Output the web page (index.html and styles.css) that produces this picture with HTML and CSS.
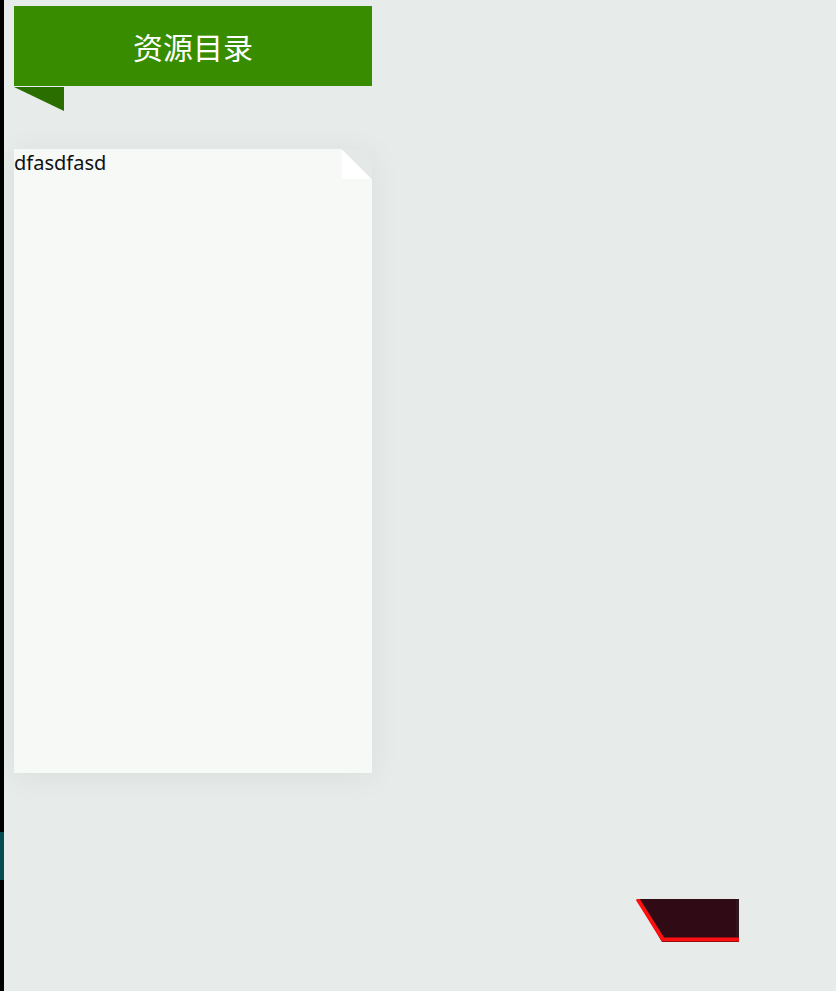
FILE: index.html
```html
<!DOCTYPE html>
<html lang="zh">
<head>
<meta charset="utf-8">
<title>资源目录</title>
<link rel="stylesheet" href="styles.css">
</head>
<body>
<div class="edge"><div class="edge-mark"></div></div>
<main class="main">
  <header class="banner">资源目录</header>
  <div class="banner-tail"></div>
  <section class="card">
    <div class="card-fold"></div>
    <p class="card-text">dfasdfasd</p>
  </section>
  <svg class="tag" width="104" height="44" viewBox="0 0 104 44">
    <polygon points="0.5,0 103,0 103,43 26,43" fill="#300a15"/>
    <polyline points="1.5,0 27,40.5 103,40.5" fill="none" stroke="#ff1010" stroke-width="4"/>
    <rect x="100" y="0" width="3" height="38" fill="#2f1620"/>
  </svg>
</main>
</body>
</html>
```

FILE: styles.css
```css
html, body {
  margin: 0;
  padding: 0;
}
body {
  background: #e7ebea;
  display: flex;
  min-height: 991px;
  font-family: "Noto Sans", "Noto Sans CJK SC", sans-serif;
}
.edge {
  width: 4px;
  flex: none;
  background: #000;
  padding-top: 832px;
  box-sizing: border-box;
}
.edge-mark {
  height: 48px;
  background: #064b4f;
}
.main {
  padding: 6px 0 0 10px;
  display: flex;
  flex-direction: column;
  align-items: flex-start;
}
.banner {
  width: 358px;
  height: 80px;
  background: #378c00;
  color: #fff;
  font-family: "Noto Sans CJK SC", sans-serif;
  font-size: 30px;
  display: flex;
  align-items: center;
  justify-content: center;
}
.banner-tail {
  width: 50px;
  height: 24px;
  margin-top: 1px;
  background: #2a6e00;
  clip-path: polygon(0 0, 100% 0, 100% 100%);
}
.card {
  position: relative;
  margin-top: 38px;
  width: 358px;
  height: 624px;
  background: #f7f9f7;
  box-shadow: 0 4px 30px rgba(0, 0, 0, 0.06);
}
.card-fold {
  position: absolute;
  top: 0;
  right: 0;
  width: 30px;
  height: 30px;
  background: linear-gradient(to top right, #ffffff 50%, #e4e8e7 50%);
}
.card-text {
  margin: 0;
  padding-top: 0;
  font-size: 20px;
  line-height: 27px;
  color: #111;
}
.tag {
  display: block;
  margin: 126px 0 0 622px;
}
```
